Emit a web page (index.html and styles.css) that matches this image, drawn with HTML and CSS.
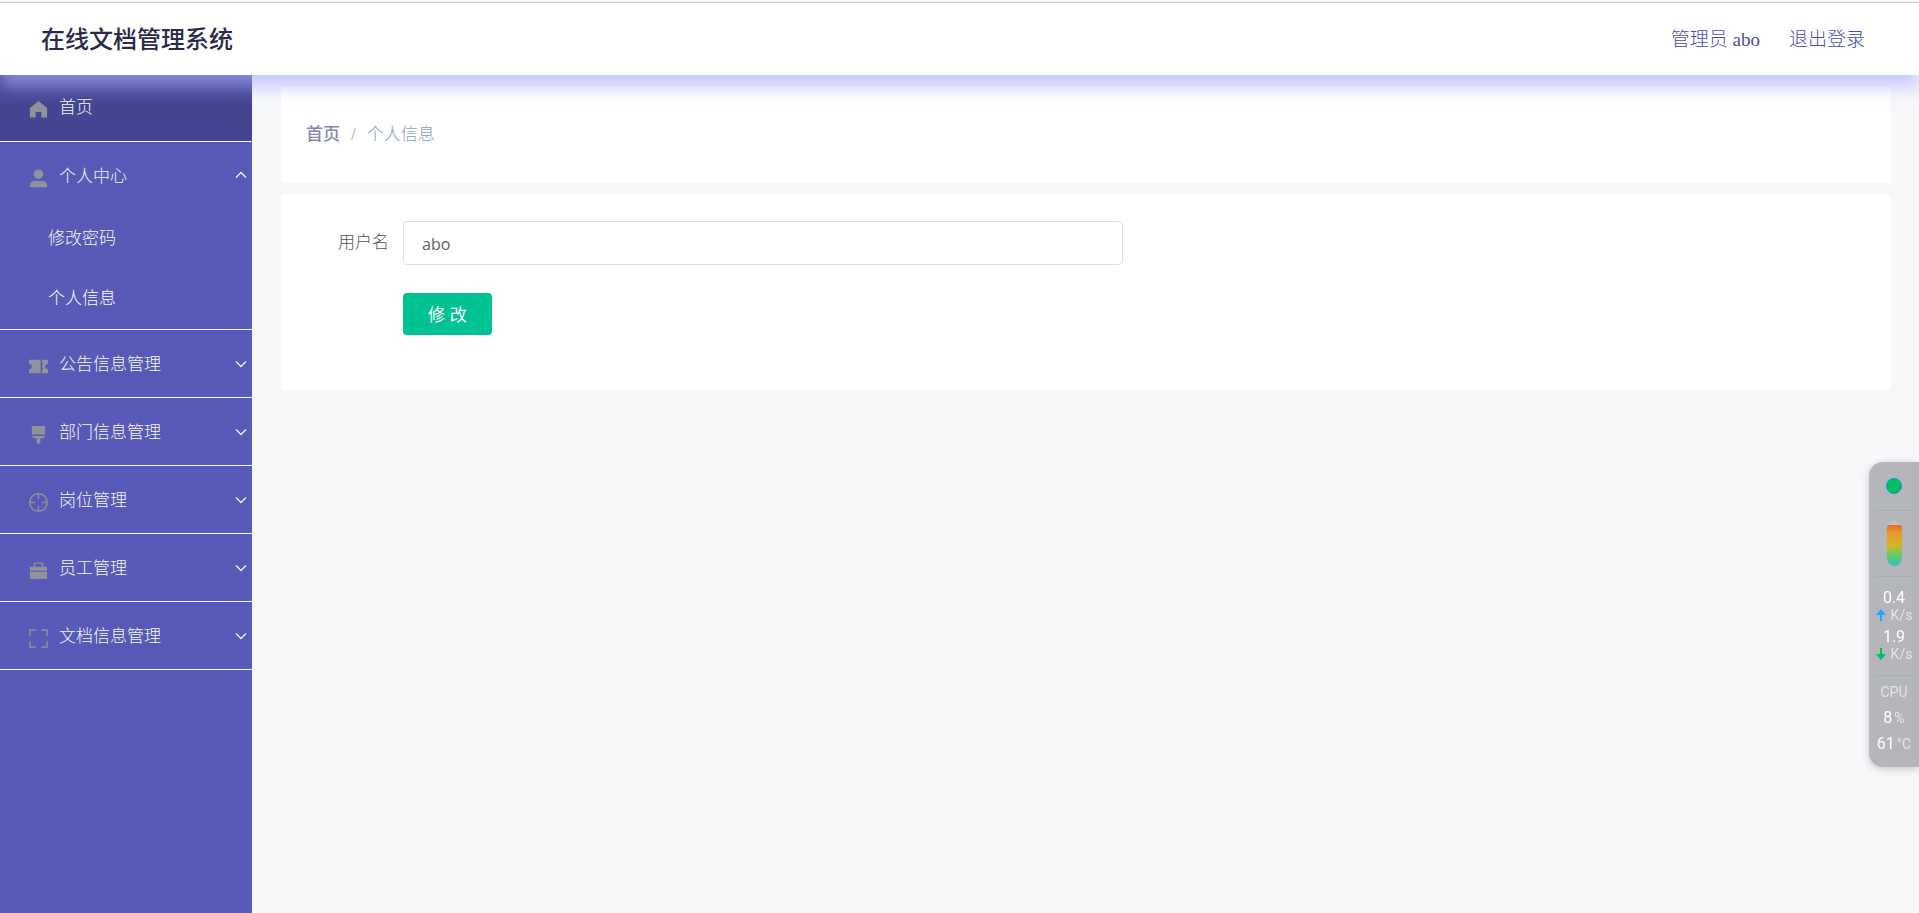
FILE: index.html
```html
<!DOCTYPE html>
<html lang="zh-CN">
<head>
<meta charset="utf-8">
<title>在线文档管理系统</title>
<link rel="stylesheet" href="styles.css">
</head>
<body>
<header class="header">
  <h1 class="title">在线文档管理系统</h1>
  <nav class="account">
    <a href="#">管理员 abo</a>
    <a href="#">退出登录</a>
  </nav>
</header>
<div class="layout">
  <aside class="sidebar">
    <a class="row row-home" href="#">
      <svg class="icon" viewBox="0 0 20 20"><path d="M10 1 19 8.500V18.500H13V12.500H7V18.500H1V8.500Z"/></svg>
      <span>首页</span>
    </a>
    <section class="group">
      <button class="row" type="button" aria-expanded="true">
        <svg class="icon" viewBox="0 0 20 20"><circle cx="10" cy="5.500" r="5"/><path d="M1 19.200V17.500Q1 12.500 6 12.500H14Q19 12.500 19 17.500V19.200Z"/></svg>
        <span>个人中心</span>
        <svg class="chevron" viewBox="0 0 12 12"><path d="M1 7.500 6 2.500 11 7.500"/></svg>
      </button>
      <a class="sub" href="#">修改密码</a>
      <a class="sub sub-active" href="#">个人信息</a>
    </section>
    <section class="group">
      <button class="row" type="button">
        <svg class="icon" viewBox="0 0 20 20"><path d="M0 3H12.200V17H0V13Q3 12.500 3 10T0 7ZM13.600 3H20V7Q17 7.500 17 10T20 13V17H13.600V13.500H14.500V10.500H13.600V8.500H14.500V6H13.600Z"/></svg>
        <span>公告信息管理</span>
        <svg class="chevron" viewBox="0 0 12 12"><path d="M1 3.500 6 8.500 11 3.500"/></svg>
      </button>
    </section>
    <section class="group">
      <button class="row" type="button">
        <svg class="icon" viewBox="0 0 20 20"><path d="M3 1H17V10H3ZM3 11.500H17Q16.500 14 14 14H12V18Q12 20 10 20T8 18V14H6Q3.500 14 3 11.500Z"/></svg>
        <span>部门信息管理</span>
        <svg class="chevron" viewBox="0 0 12 12"><path d="M1 3.500 6 8.500 11 3.500"/></svg>
      </button>
    </section>
    <section class="group">
      <button class="row" type="button">
        <svg class="icon icon-line" viewBox="0 0 20 20"><circle cx="10" cy="10" r="9.200"/><path d="M10 1V6.500M10 13.500V19M1 10H6.500M13.500 10H19"/></svg>
        <span>岗位管理</span>
        <svg class="chevron" viewBox="0 0 12 12"><path d="M1 3.500 6 8.500 11 3.500"/></svg>
      </button>
    </section>
    <section class="group">
      <button class="row" type="button">
        <svg class="icon" viewBox="0 0 20 20"><path d="M1 6H5V1.500H15V6H19V10.300H1ZM6.500 6H13.500V3H6.500ZM1 11.400H19V19H1Z" fill-rule="evenodd"/></svg>
        <span>员工管理</span>
        <svg class="chevron" viewBox="0 0 12 12"><path d="M1 3.500 6 8.500 11 3.500"/></svg>
      </button>
    </section>
    <section class="group">
      <button class="row" type="button">
        <svg class="icon icon-line" viewBox="0 0 20 20"><path d="M1 7V1H7M13 1H19V7M19 13V19H13M7 19H1V13"/></svg>
        <span>文档信息管理</span>
        <svg class="chevron" viewBox="0 0 12 12"><path d="M1 3.500 6 8.500 11 3.500"/></svg>
      </button>
    </section>
  </aside>
  <main class="main">
    <nav class="card breadcrumb">
      <a href="#">首页</a>
      <span class="slash">/</span>
      <span>个人信息</span>
    </nav>
    <form class="card form">
      <label for="username">用户名</label>
      <input id="username" type="text" value="abo">
      <button class="submit" type="button">修 改</button>
    </form>
  </main>
</div>
<aside class="monitor">
  <div class="cell cell-dot"><span class="dot"></span></div>
  <div class="cell cell-gauge"><span class="gauge"></span></div>
  <div class="cell cell-net">
    <b>0.4</b>
    <span class="rate"><svg class="arrow arrow-up" viewBox="0 0 10 12"><path d="M5 0 10 6H6V12H4V6H0Z"/></svg>K/s</span>
    <b>1.9</b>
    <span class="rate"><svg class="arrow arrow-down" viewBox="0 0 10 12"><path d="M5 12 10 6H6V0H4V6H0Z"/></svg>K/s</span>
  </div>
  <div class="cell cell-cpu">
    <span>CPU</span>
    <span class="reading"><b>8</b>%</span>
    <span class="reading"><b>61</b>°C</span>
  </div>
</aside>
</body>
</html>
```
FILE: styles.css
```css
* { box-sizing: border-box; }
body {
  margin: 0;
  min-height: 100vh;
  display: flex;
  flex-direction: column;
  background: #f6f8fa;
  border-top: 2px solid #f8f8f8;
  font: 300 17px/24px "Liberation Sans", "Noto Sans CJK SC", sans-serif;
}
a { color: inherit; text-decoration: none; }

.header {
  position: relative;
  z-index: 1;
  height: 73px;
  padding: 1px 54px 0 41px;
  display: flex;
  align-items: center;
  justify-content: space-between;
  background: #fff;
  border-top: 1px solid #ccc;
  box-shadow: 0 12px 16px rgba(172, 174, 255, .64);
}
.title {
  margin: 0;
  font: 500 24px/32px "Liberation Serif", "Noto Sans CJK SC", serif;
  color: #2a2b4a;
}
.account {
  display: flex;
  gap: 29px;
  font: 300 19px/28px "Liberation Serif", "Noto Sans CJK SC", serif;
  color: #4a4cb2;
}

.layout { flex: 1; display: flex; }
.sidebar { width: 252px; flex: none; background: #575ab6; color: #f6f6f2; }
.row {
  width: 100%;
  height: 67px;
  padding: 2px 5px 0 28px;
  display: flex;
  align-items: center;
  gap: 10px;
  border: 0;
  background: none;
  color: inherit;
  font: inherit;
  text-align: left;
}
.row-home { padding-top: 0; background: #444693; border-bottom: 1px solid #fff; }
.group { border-bottom: 1px solid #fff; }
.icon { width: 21px; height: 21px; margin-top: 3px; padding: 1px; fill: #909399; }
.icon-line { fill: none; stroke: #909399; stroke-width: 1.5; }
.chevron {
  width: 12px;
  height: 12px;
  margin: 0 0 2px auto;
  fill: none;
  stroke: #eeeef8;
  stroke-width: 1.5;
}
.sub { display: block; padding: 18px 0 18px 48px; }
.sub-active { color: #fff; }

.main {
  flex: 1;
  padding: 12px 28px 12px 29px;
  display: flex;
  flex-direction: column;
  gap: 12px;
}
.card { background: #fff; }
.breadcrumb {
  padding: 36px 25px;
  display: flex;
  gap: 11px;
  color: #8c9eb6;
}
.breadcrumb a { font-weight: 500; color: #8587ae; }
.slash { color: #c0c4cc; }
.form {
  padding: 26px 24px 55px;
  display: grid;
  grid-template-columns: 84px minmax(0, 720px);
  gap: 28px 14px;
  align-items: center;
  color: #505256;
}
.form label { text-align: right; }
.form input {
  width: 100%;
  height: 44px;
  padding: 2px 18px 0;
  border: 1px solid #dcdfe6;
  border-radius: 4px;
  background: #fff;
  color: #606266;
  font: 400 16px "Open Sans", "Noto Sans CJK SC", sans-serif;
}
.submit {
  grid-column: 2;
  justify-self: start;
  height: 42px;
  padding: 0 25px 1px;
  border: 0;
  border-radius: 4px;
  background: #00c292;
  color: #fff;
  font: 400 17px "Liberation Sans", "Noto Sans CJK SC", sans-serif;
}

.monitor {
  position: fixed;
  z-index: 2;
  right: 0;
  top: 462px;
  width: 50px;
  padding: 0 6px 10px;
  border-radius: 14px 0 0 14px;
  background: #b5b6bc;
  box-shadow: 0 2px 8px rgba(0, 0, 0, .2);
  color: #e2e3e7;
  font: 400 14px/16px Roboto, sans-serif;
}
.monitor b { color: #fff; font-weight: 400; font-size: 16px; }
.cell { display: flex; flex-direction: column; align-items: center; white-space: nowrap; }
.cell + .cell { border-top: 1px solid #a5aeb4; }
.cell-dot { padding: 16px 0; }
.dot { width: 16px; height: 16px; border-radius: 50%; background: #00bf63; border: 1px solid #2d86d0; }
.cell-gauge { padding: 10px 0; }
.gauge {
  width: 15px;
  height: 45px;
  border-radius: 8px;
  background: linear-gradient(#c0c1c7 4px, #e8672f 4px, #e89a2c 12px, #d2b81e 24px, #68c96c 34px, #2fc0c0);
}
.cell-net { padding: 11px 0 9px; }
.cell-net b { line-height: 19px; }
.rate { display: flex; align-items: center; gap: 5px; height: 16px; margin-bottom: 4px; }
.arrow { width: 10px; height: 12px; }
.arrow-up { fill: #1aa9ff; }
.arrow-down { fill: #00bf63; }
.cell-cpu { padding-top: 4px; line-height: 25px; }
.reading { display: flex; align-items: baseline; gap: 2px; }
```
